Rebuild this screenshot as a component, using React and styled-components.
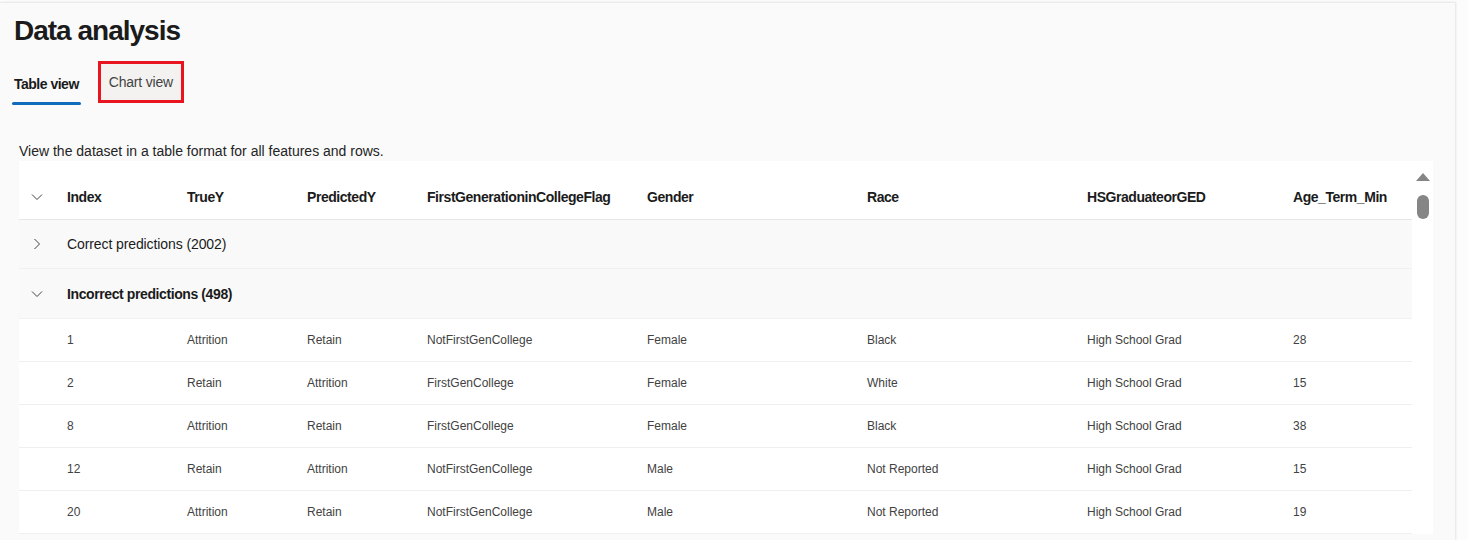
import React from 'react';
import styled, { createGlobalStyle } from 'styled-components';

const GlobalStyle = createGlobalStyle`
  html, body {
    margin: 0;
    padding: 0;
    background: #fcfcfc;
    font-family: "Segoe UI", "Liberation Sans", Arial, sans-serif;
    color: #242424;
  }
`;

const columns = [
  { key: 'index', label: 'Index', width: 120 },
  { key: 'trueY', label: 'TrueY', width: 120 },
  { key: 'predY', label: 'PredictedY', width: 120 },
  { key: 'firstGen', label: 'FirstGenerationinCollegeFlag', width: 220 },
  { key: 'gender', label: 'Gender', width: 220 },
  { key: 'race', label: 'Race', width: 220 },
  { key: 'hs', label: 'HSGraduateorGED', width: 206 },
  { key: 'age', label: 'Age_Term_Min', width: 139 },
];

const rows = [
  ['1', 'Attrition', 'Retain', 'NotFirstGenCollege', 'Female', 'Black', 'High School Grad', '28'],
  ['2', 'Retain', 'Attrition', 'FirstGenCollege', 'Female', 'White', 'High School Grad', '15'],
  ['8', 'Attrition', 'Retain', 'FirstGenCollege', 'Female', 'Black', 'High School Grad', '38'],
  ['12', 'Retain', 'Attrition', 'NotFirstGenCollege', 'Male', 'Not Reported', 'High School Grad', '15'],
  ['20', 'Attrition', 'Retain', 'NotFirstGenCollege', 'Male', 'Not Reported', 'High School Grad', '19'],
];

const gridTemplate = `48px ${columns.map((c) => `${c.width}px`).join(' ')}`;

const ChevronDown = () => (
  <svg width="12" height="12" viewBox="0 0 12 12" fill="none">
    <path d="M1 3.5 L6 8.5 L11 3.5" stroke="#424242" strokeWidth="1" strokeLinejoin="round" />
  </svg>
);

const ChevronRight = () => (
  <svg width="12" height="12" viewBox="0 0 12 12" fill="none">
    <path d="M3.5 1 L8.5 6 L3.5 11" stroke="#424242" strokeWidth="1" strokeLinejoin="round" />
  </svg>
);

export default function App() {
  return (
    <>
      <GlobalStyle />
      <Page>
        <Panel>
          <Title>Data analysis</Title>
          <Tabs>
            <Tab $active>Table view</Tab>
            <Tab $highlight>Chart view</Tab>
          </Tabs>
          <Description>View the dataset in a table format for all features and rows.</Description>
          <TableFrame>
            <TableBody>
              <HeaderRow>
                <ChevronCell><ChevronDown /></ChevronCell>
                {columns.map((c) => (
                  <HeaderCell key={c.key}>{c.label}</HeaderCell>
                ))}
              </HeaderRow>
              <GroupRow>
                <ChevronCell><ChevronRight /></ChevronCell>
                <GroupTitle>Correct predictions (2002)</GroupTitle>
              </GroupRow>
              <GroupRow $open>
                <ChevronCell><ChevronDown /></ChevronCell>
                <GroupTitle $bold>Incorrect predictions (498)</GroupTitle>
              </GroupRow>
              {rows.map((r) => (
                <DataRow key={r[0]}>
                  <ChevronCell />
                  {r.map((v, i) => (
                    <DataCell key={i}>{v}</DataCell>
                  ))}
                </DataRow>
              ))}
            </TableBody>
            <ScrollLane>
              <ScrollArrow />
              <ScrollThumb />
            </ScrollLane>
          </TableFrame>
        </Panel>
      </Page>
    </>
  );
}

const Page = styled.div`
  height: 540px;
  overflow: hidden;
  padding-top: 2px;
  box-sizing: border-box;
`;

const Panel = styled.div`
  width: 1455px;
  height: 538px;
  box-sizing: border-box;
  background: #fafafa;
  border-top: 1px solid #ececec;
  box-shadow: 1px 0 2px rgba(0, 0, 0, 0.1);
  padding-left: 14px;
  overflow: hidden;
`;

const Title = styled.h1`
  margin: 0;
  padding-top: 10px;
  font-size: 28px;
  line-height: 36px;
  font-weight: 700;
  letter-spacing: -1px;
  color: #1b1b1b;
`;

const Tabs = styled.div`
  display: flex;
  align-items: stretch;
  gap: 17px;
  margin-top: 13px;
  margin-left: -2px;
  height: 44px;
`;

const Tab = styled.div`
  position: relative;
  display: flex;
  align-items: center;
  padding: 0 ${(p) => (p.$highlight ? '8px' : '2px')};
  font-size: 14px;
  font-weight: ${(p) => (p.$active ? 700 : 400)};
  letter-spacing: ${(p) => (p.$active ? '-0.5px' : '-0.2px')};
  color: ${(p) => (p.$active ? '#1b1b1b' : '#424242')};
  background: ${(p) => (p.$highlight ? '#f3f2f1' : 'transparent')};
  border: ${(p) => (p.$highlight ? '3px solid #e8141f' : '0')};
  height: ${(p) => (p.$highlight ? '36px' : 'auto')};
  margin-top: ${(p) => (p.$highlight ? '-1px' : '0')};
  box-sizing: content-box;

  &::after {
    content: '';
    display: ${(p) => (p.$active ? 'block' : 'none')};
    position: absolute;
    left: 0;
    right: 0;
    bottom: 1px;
    height: 3px;
    border-radius: 2px;
    background: #0f6cbd;
  }
`;

const Description = styled.p`
  margin: 0;
  padding-top: 36px;
  padding-left: 5px;
  font-size: 14px;
  line-height: 19px;
  color: #242424;
`;

const TableFrame = styled.div`
  display: flex;
  margin-left: 5px;
  width: 1414px;
  background: #ffffff;
`;

const TableBody = styled.div`
  width: 1393px;
`;

const RowBase = styled.div`
  display: grid;
  grid-template-columns: ${gridTemplate};
  align-items: center;
  box-sizing: border-box;
`;

const HeaderRow = styled(RowBase)`
  height: 59px;
  padding-top: 14px;
  border-bottom: 1px solid #e6e6e6;
  background: #ffffff;
`;

const GroupRow = styled(RowBase)`
  height: ${(p) => (p.$open ? '50px' : '49px')};
  background: #f9f9f9;
  border-bottom: 1px solid #f1f1f1;
`;

const DataRow = styled(RowBase)`
  height: 43px;
  background: #ffffff;
  border-bottom: 1px solid #efefef;
`;

const ChevronCell = styled.div`
  display: flex;
  justify-content: center;
  padding-right: 12px;
`;

const HeaderCell = styled.div`
  font-size: 14px;
  font-weight: 700;
  letter-spacing: -0.45px;
  color: #1b1b1b;
  white-space: nowrap;
`;

const GroupTitle = styled.div`
  grid-column: 2 / span 4;
  font-size: 14px;
  font-weight: ${(p) => (p.$bold ? 700 : 400)};
  letter-spacing: ${(p) => (p.$bold ? '-0.4px' : '-0.1px')};
  color: #1b1b1b;
`;

const DataCell = styled.div`
  font-size: 12px;
  color: #424242;
  white-space: nowrap;
`;

const ScrollLane = styled.div`
  position: relative;
  width: 21px;
  flex-shrink: 0;
  background: #ffffff;
`;

const ScrollArrow = styled.div`
  position: absolute;
  top: 12px;
  left: 4px;
  width: 0;
  height: 0;
  border-left: 7px solid transparent;
  border-right: 7px solid transparent;
  border-bottom: 8px solid #858585;
`;

const ScrollThumb = styled.div`
  position: absolute;
  top: 34px;
  left: 5px;
  width: 12px;
  height: 24px;
  border-radius: 6px;
  background: #858585;
`;
